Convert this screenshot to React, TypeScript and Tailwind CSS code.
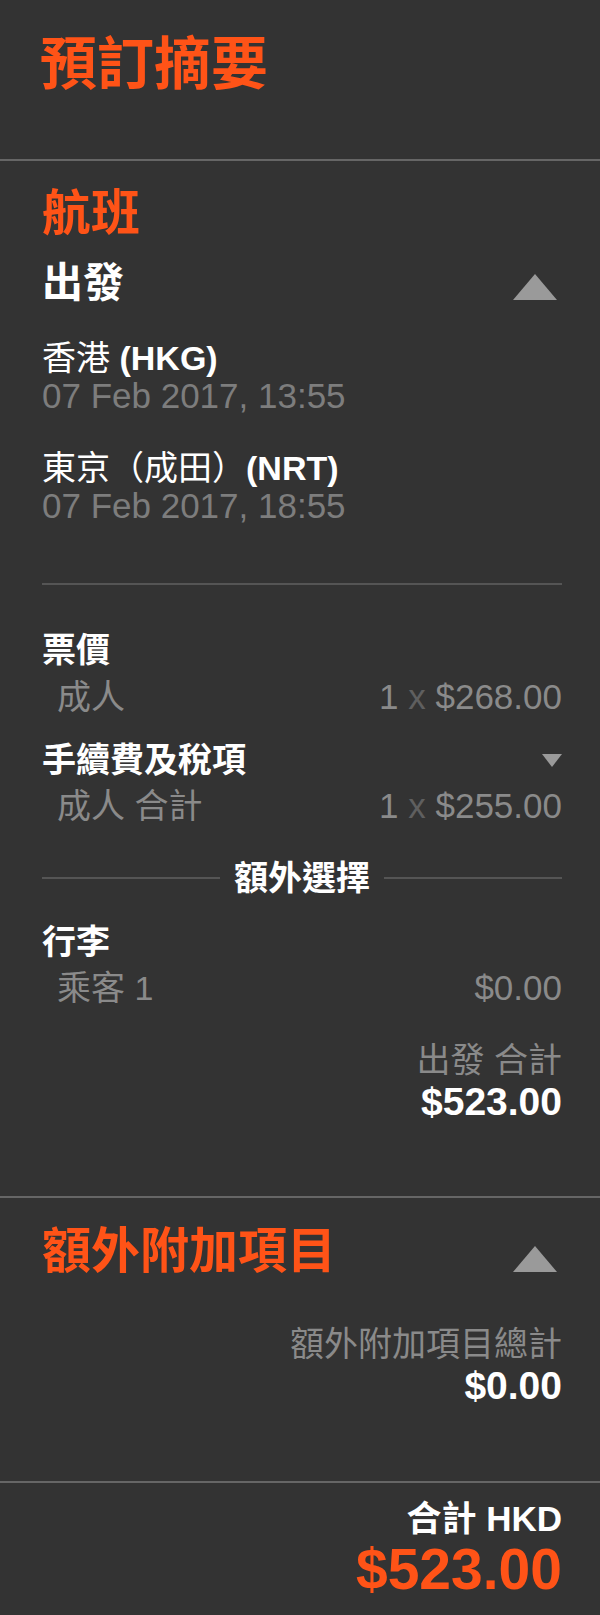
const font = "font-['Liberation_Sans','Noto_Sans_CJK_TC',sans-serif]";

function TriangleUp() {
  return (
    <svg width="44" height="26" viewBox="0 0 44 26" className="mr-[5px] shrink-0">
      <path d="M22 0 L44 26 L0 26 Z" fill="#9a9a9a" />
    </svg>
  );
}

function TriangleDown() {
  return (
    <svg width="20" height="13" viewBox="0 0 20 13" className="shrink-0">
      <path d="M0 0 L20 0 L10 13 Z" fill="#9a9a9a" />
    </svg>
  );
}

function Leg({ place, code, time }: { place: string; code: string; time: string }) {
  return (
    <div>
      <p className="text-[34px] leading-[38px] text-white">
        {place}
        <span className="font-bold">{code}</span>
      </p>
      <p className="text-[35px] leading-[38px] text-[#7d7d7d]">{time}</p>
    </div>
  );
}

function PriceRow({ label, qty, amount, mt }: { label: string; qty?: string; amount: string; mt: string }) {
  return (
    <div className={`${mt} flex items-baseline justify-between pl-[15px] text-[34px] leading-[38px] text-[#8a8a8a]`}>
      <span>{label}</span>
      <span className="text-[35px]">
        {qty && (
          <>
            {qty} <span className="text-[#5f5f5f]">x</span>{' '}
          </>
        )}
        {amount}
      </span>
    </div>
  );
}

export default function App() {
  return (
    <div className={`${font} min-h-[1615px] w-[600px] bg-[#333333]`}>
      {/* header */}
      <header className="h-[161px] border-b-2 border-[#666666] pl-[40px] pt-[34px]">
        <h1 className="text-[57px] font-bold leading-[60px] text-[#ff5317]">預訂摘要</h1>
      </header>

      {/* flight */}
      <section className="border-b-2 border-[#666666] pb-[75px] pl-[42px] pr-[38px]">
        <h2 className="mt-[27px] text-[49px] font-bold leading-[50px] text-[#ff5317]">航班</h2>
        <div className="mt-[23px] flex items-start justify-between">
          <h3 className="text-[41px] font-bold leading-[44px] text-white">出發</h3>
          <div className="mt-[13px]">
            <TriangleUp />
          </div>
        </div>

        <div className="mt-[34px]">
          <Leg place="香港 " code="(HKG)" time="07 Feb 2017, 13:55" />
        </div>
        <div className="mt-[34px]">
          <Leg place="東京（成田）" code="(NRT)" time="07 Feb 2017, 18:55" />
        </div>

        <div className="mt-[58px] h-[2px] bg-[#555555]" />

        <h4 className="mt-[46px] text-[34px] font-bold leading-[38px] text-white">票價</h4>
        <PriceRow mt="mt-[9px]" label="成人" qty="1" amount="$268.00" />

        <div className="mt-[25px] flex items-center justify-between">
          <h4 className="text-[34px] font-bold leading-[38px] text-white">手續費及稅項</h4>
          <TriangleDown />
        </div>
        <PriceRow mt="mt-[8px]" label="成人 合計" qty="1" amount="$255.00" />

        <div className="mt-[34px] flex items-center gap-[14px]">
          <div className="h-[2px] flex-1 bg-[#555555]" />
          <span className="text-[34px] font-bold leading-[38px] text-white">額外選擇</span>
          <div className="h-[2px] flex-1 bg-[#555555]" />
        </div>

        <h4 className="mt-[26px] text-[34px] font-bold leading-[38px] text-white">行李</h4>
        <PriceRow mt="mt-[8px]" label="乘客 1" amount="$0.00" />

        <div className="mt-[34px] text-right">
          <p className="text-[34px] leading-[38px] text-[#8a8a8a]">出發 合計</p>
          <p className="mt-[4px] text-[39px] font-bold leading-[38px] text-white">$523.00</p>
        </div>
      </section>

      {/* extras */}
      <section className="border-b-2 border-[#666666] pb-[76px] pl-[42px] pr-[38px]">
        <div className="mt-[28px] flex items-start justify-between">
          <h2 className="text-[49px] font-bold leading-[50px] text-[#ff5317]">額外附加項目</h2>
          <div className="mt-[20px]">
            <TriangleUp />
          </div>
        </div>
        <div className="mt-[49px] text-right">
          <p className="text-[34px] leading-[38px] text-[#8a8a8a]">額外附加項目總計</p>
          <p className="mt-[4px] text-[39px] font-bold leading-[38px] text-white">$0.00</p>
        </div>
      </section>

      {/* total */}
      <footer className="pb-[14px] pl-[42px] pr-[38px] pt-[17px] text-right">
        <p className="text-[35px] font-bold leading-[38px] text-white">合計 HKD</p>
        <p className="mt-[1px] text-[57px] font-bold leading-[60px] text-[#ff5317]">$523.00</p>
      </footer>
    </div>
  );
}
